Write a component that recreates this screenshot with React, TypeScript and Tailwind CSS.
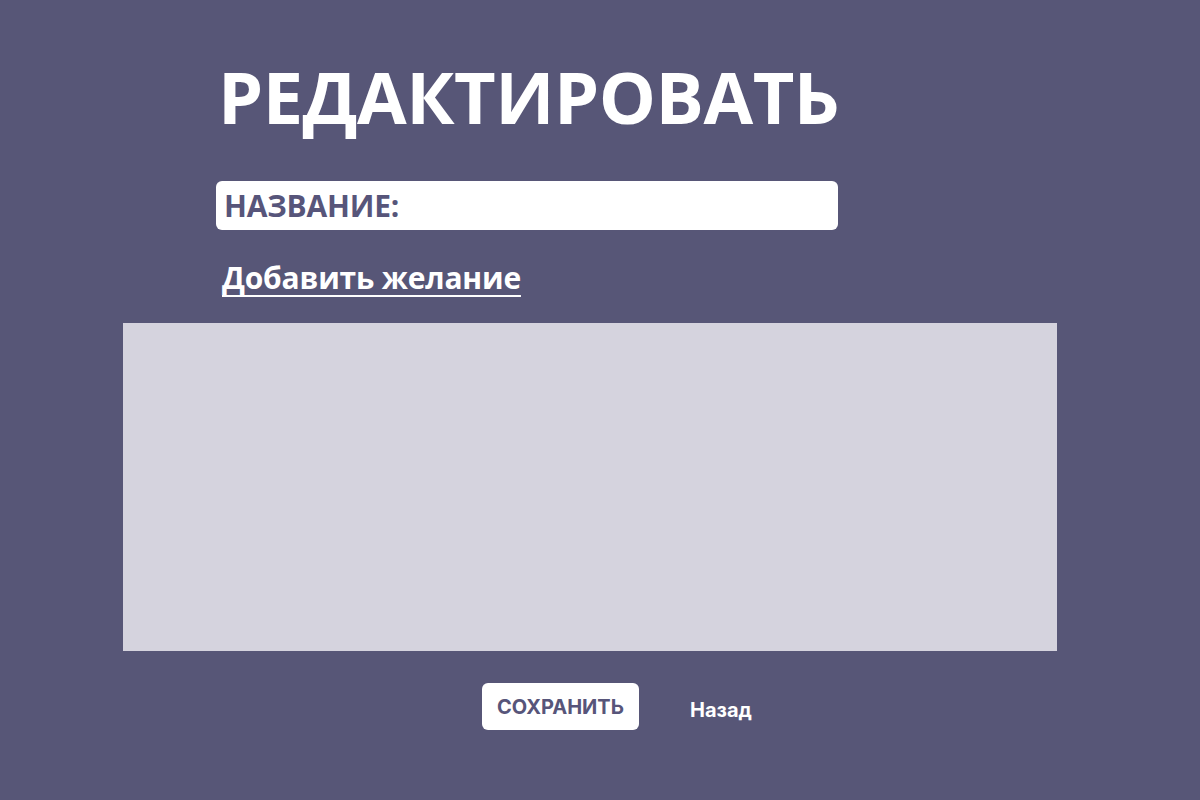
export default function App() {
  return (
    <div
      className="min-h-[800px] w-full bg-[#575677] text-white"
      style={{ fontFamily: '"Open Sans", "Noto Sans", sans-serif' }}
    >
      <div className="flex flex-col">
        {/* Title */}
        <h1 className="ml-[218px] pt-[48px] text-[72px] font-bold leading-[96px] tracking-[-0.5px]">
          РЕДАКТИРОВАТЬ
        </h1>

        {/* Name field */}
        <div className="ml-[216px] mt-[37px] flex h-[49px] w-[622px] items-center rounded-md bg-white px-2">
          <span className="text-[30px] font-bold tracking-[-0.2px] text-[#57557a]">НАЗВАНИЕ:</span>
        </div>

        <a
          href="#"
          className="ml-[222px] mt-[29px] w-fit text-[30px] font-bold leading-[38px] tracking-[-0.2px] underline decoration-2 underline-offset-[6px] [text-decoration-skip-ink:none]"
        >
          Добавить желание
        </a>

        {/* Wishes list */}
        <div className="ml-[123px] mt-[26px] h-[328px] w-[934px] bg-[#d5d3de]" />

        {/* Actions */}
        <div className="mt-[32px] flex items-center" style={{ fontFamily: "Inter, sans-serif" }}>
          <button className="ml-[482px] h-[47px] w-[157px] rounded-md bg-white text-[20px] font-bold text-[#57557a]">
            СОХРАНИТЬ
          </button>
          <button className="ml-[51px] mt-[7px] text-[20px] font-bold text-white">Назад</button>
        </div>
      </div>
    </div>
  );
}
